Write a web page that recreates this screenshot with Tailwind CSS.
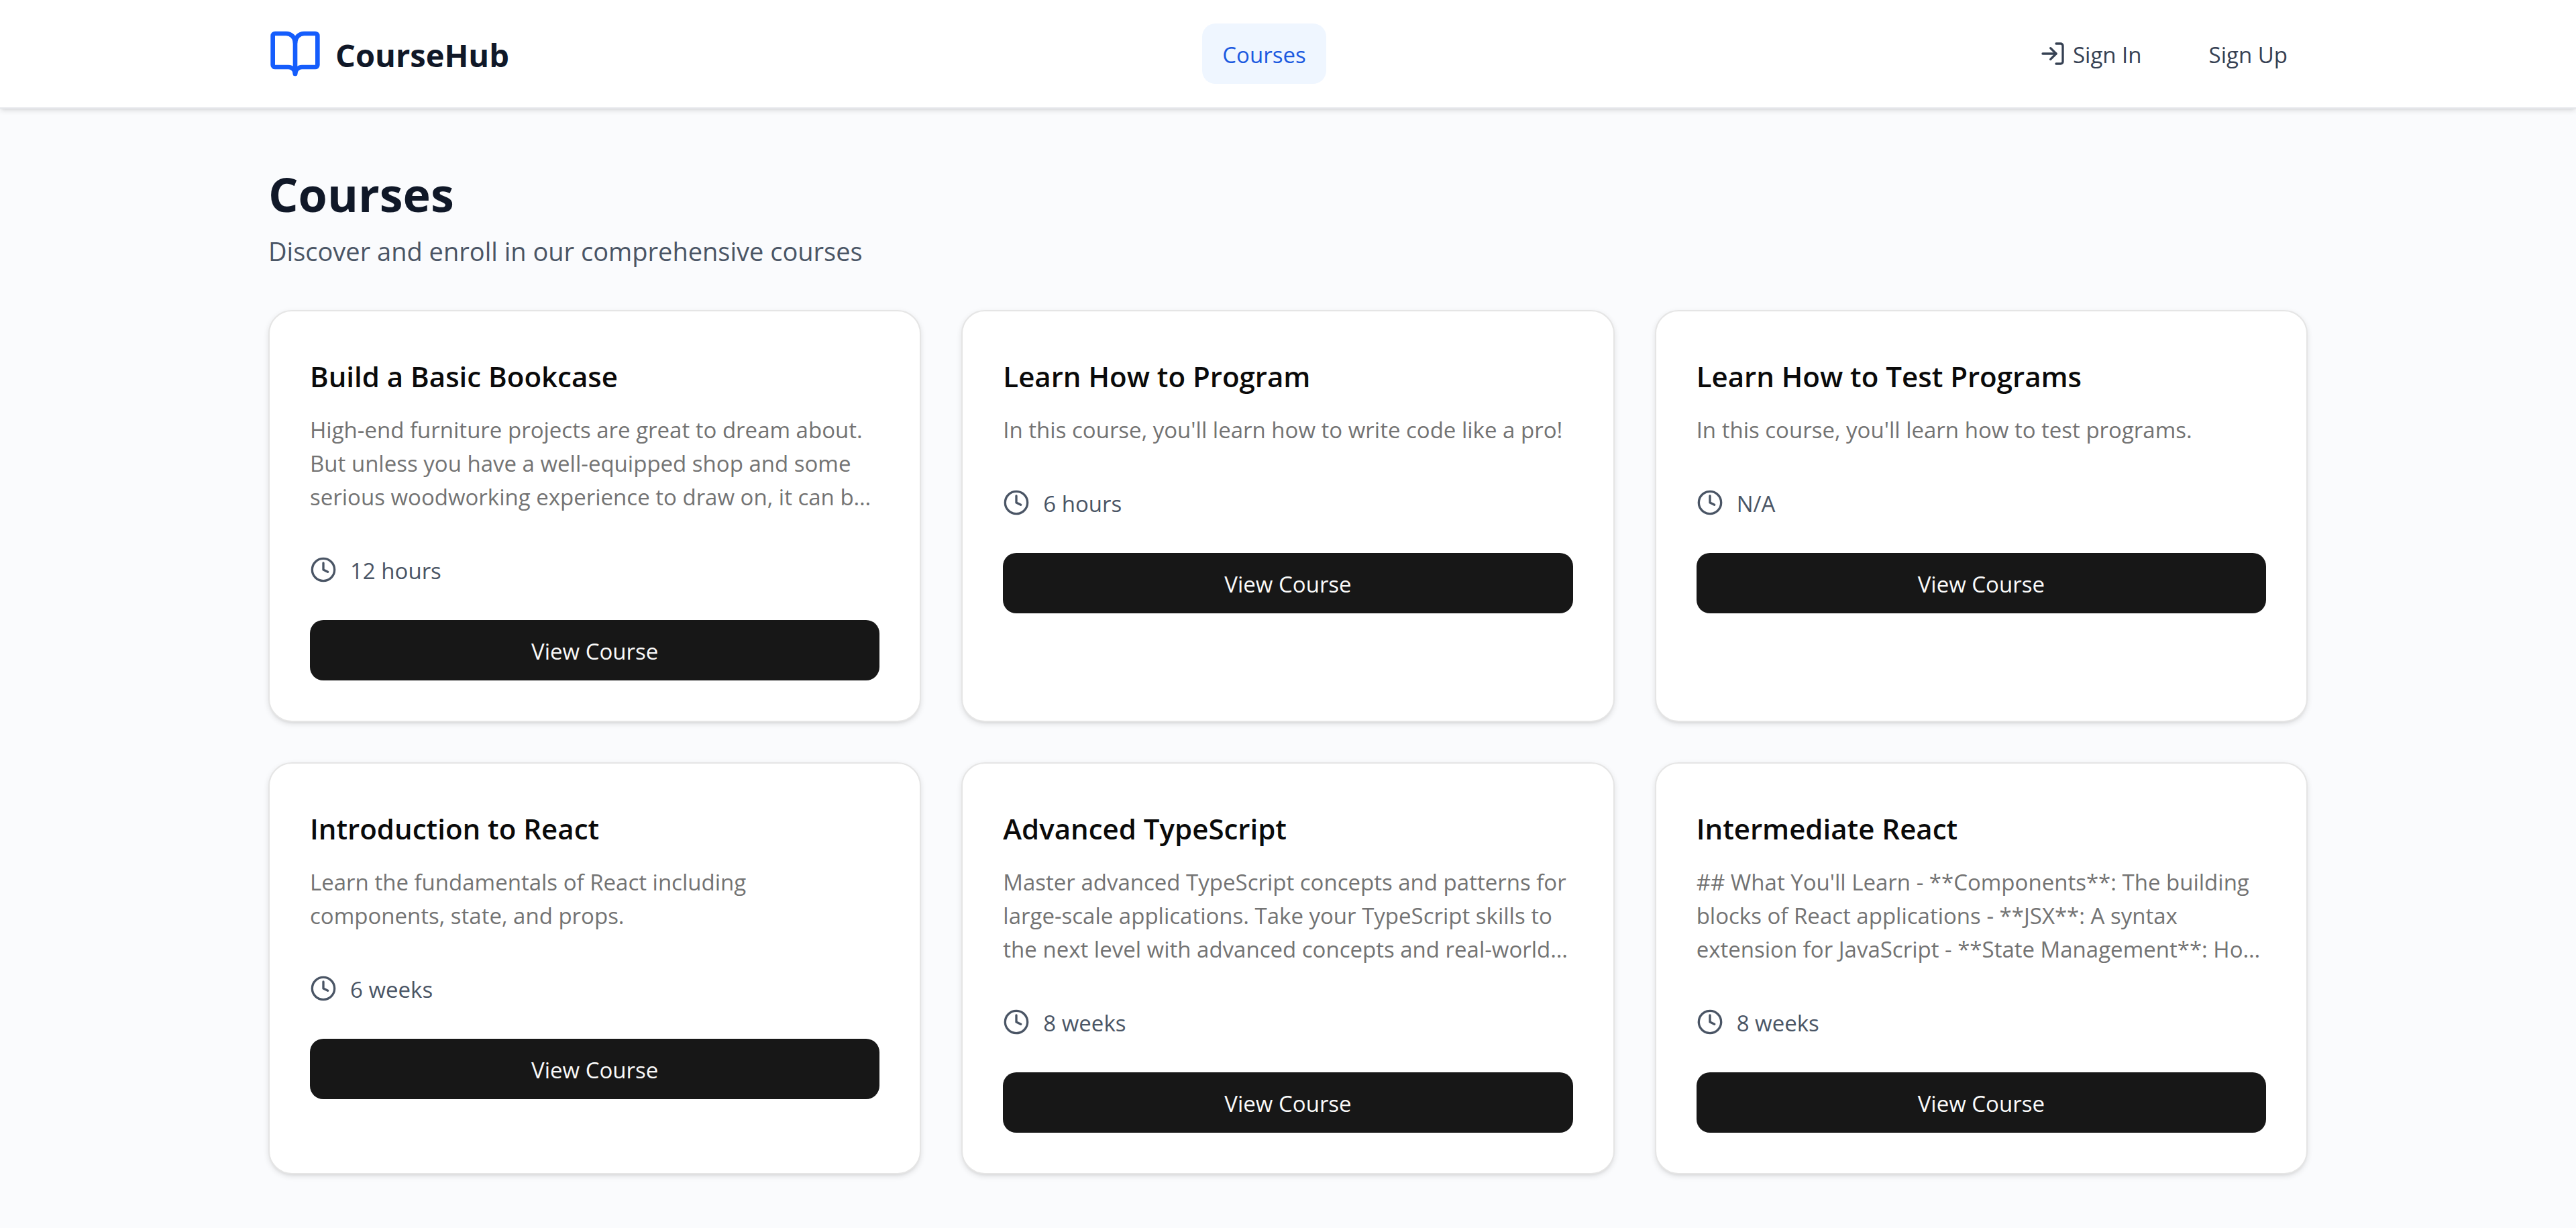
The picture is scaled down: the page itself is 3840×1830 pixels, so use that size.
<!DOCTYPE html>
<html lang="en">
<head>
<meta charset="utf-8">
<meta name="viewport" content="width=device-width, initial-scale=1">
<title>CourseHub</title>
<script src="https://cdn.jsdelivr.net/npm/@tailwindcss/browser@4"></script>
</head>
<body class="min-h-screen bg-[#fafbfd] font-['Open_Sans','Noto_Sans',sans-serif] text-[33px] leading-[50px] text-neutral-950">
<header class="border-b-2 border-gray-200 bg-white shadow-[0_3px_8px_rgb(0_0_0/0.1),0_3px_5px_-3px_rgb(0_0_0/0.1)]">
  <div class="mx-auto flex h-40 max-w-[3200px] items-center justify-between px-20">
    <a href="#" class="flex items-center gap-5">
      <svg class="size-20 text-blue-600" viewBox="0 0 24 24" fill="none" stroke="currentColor" stroke-width="2" stroke-linecap="round" stroke-linejoin="round" aria-hidden="true"><path d="M12 7v14"/><path d="M3 18a1 1 0 0 1-1-1V4a1 1 0 0 1 1-1h5a4 4 0 0 1 4 4 4 4 0 0 1 4-4h5a1 1 0 0 1 1 1v13a1 1 0 0 1-1 1h-6a3 3 0 0 0-3 3 3 3 0 0 0-3-3z"/></svg>
      <span class="pt-1 text-[47px] leading-[70px] font-bold text-gray-900">CourseHub</span>
    </a>
    <nav aria-label="Main">
      <a href="#" aria-current="page" class="flex h-[90px] items-center rounded-[20px] bg-blue-50 px-[30px] pt-1 text-[#1b59e0]">Courses</a>
    </nav>
    <div class="flex items-center gap-10 text-gray-700">
      <a href="#" class="flex h-[90px] items-center gap-[10px] px-[30px]">
        <svg class="size-10" viewBox="0 0 24 24" fill="none" stroke="currentColor" stroke-width="2" stroke-linecap="round" stroke-linejoin="round" aria-hidden="true"><path d="m10 17 5-5-5-5"/><path d="M15 12H3"/><path d="M15 3h4a2 2 0 0 1 2 2v14a2 2 0 0 1-2 2h-4"/></svg>
        <span class="pt-1">Sign In</span>
      </a>
      <a href="#" class="flex h-[90px] items-center px-[30px] pt-1">Sign Up</a>
    </div>
  </div>
</header>
<main class="mx-auto max-w-[3200px] px-20 pt-[82px] pb-20">
  <h1 class="text-[70px] leading-[90px] font-bold text-gray-900">Courses</h1>
  <p class="mt-[10px] mb-[58px] text-[38px] leading-[60px] text-gray-600">Discover and enroll in our comprehensive courses</p>
  <ul id="courses" class="grid grid-cols-3 gap-[60px]"></ul>
</main>

<template id="course-card">
  <li class="rounded-[35px] border-2 border-neutral-200 bg-white px-[60px] pt-[62px] pb-[60px] shadow-[0_3px_8px_rgb(0_0_0/0.1),0_3px_5px_-3px_rgb(0_0_0/0.1)]">
    <h2 class="text-[42px] leading-[70px] font-semibold"></h2>
    <p class="mt-5 whitespace-pre-line text-neutral-500"></p>
    <div class="mt-[60px] flex items-start gap-5 text-gray-600">
      <svg class="mt-[3px] size-10" viewBox="0 0 24 24" fill="none" stroke="currentColor" stroke-width="2" stroke-linecap="round" stroke-linejoin="round" aria-hidden="true"><circle cx="12" cy="12" r="10"/><path d="M12 6v6l4 2"/></svg>
      <span></span>
    </div>
    <button type="button" class="mt-12 flex h-[90px] w-full items-center justify-center rounded-[20px] bg-neutral-900 pt-1 text-neutral-50">View Course</button>
  </li>
</template>
<script>
const courses = [
  ["Build a Basic Bookcase", "High-end furniture projects are great to dream about.\nBut unless you have a well-equipped shop and some\nserious woodworking experience to draw on, it can b…", "12 hours"],
  ["Learn How to Program", "In this course, you'll learn how to write code like a pro!", "6 hours"],
  ["Learn How to Test Programs", "In this course, you'll learn how to test programs.", "N/A"],
  ["Introduction to React", "Learn the fundamentals of React including\ncomponents, state, and props.", "6 weeks"],
  ["Advanced TypeScript", "Master advanced TypeScript concepts and patterns for\nlarge-scale applications. Take your TypeScript skills to\nthe next level with advanced concepts and real-world…", "8 weeks"],
  ["Intermediate React", "## What You'll Learn - **Components**: The building\nblocks of React applications - **JSX**: A syntax\nextension for JavaScript - **State Management**: Ho…", "8 weeks"]
];
const list = document.getElementById("courses");
const template = document.getElementById("course-card");
for (const [title, description, duration] of courses) {
  const card = template.content.cloneNode(true);
  card.querySelector("h2").textContent = title;
  card.querySelector("p").textContent = description;
  card.querySelector("span").textContent = duration;
  list.append(card);
}
</script>
</body>
</html>
